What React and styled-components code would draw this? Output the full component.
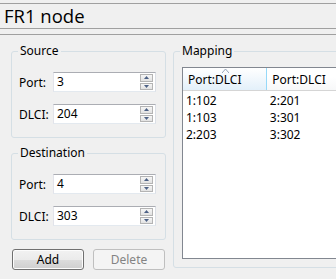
import * as React from "react"
import styled, { createGlobalStyle } from "styled-components"

const Global = createGlobalStyle`
  html, body {
    margin: 0;
    padding: 0;
    background: #f0f0f0;
  }
  body {
    font-family: "Noto Sans", "Open Sans", sans-serif;
    font-size: 12px;
    color: #000;
  }
`

const Page = styled.div`
  width: 336px;
  height: 279px;
  overflow: hidden;
  background: #f0f0f0;
  padding-top: 3px;
  box-sizing: border-box;
`

const TitleBar = styled.div`
  height: 24px;
  border-top: 1px solid #a0a0a0;
  border-bottom: 1px solid #a0a0a0;
  display: flex;
  align-items: center;
  padding-left: 4px;
  font-family: "Open Sans", "Noto Sans", sans-serif;
  font-size: 18.5px;
  line-height: 24px;
  color: #000;
`

const Separator = styled.div`
  margin-top: 5px;
  height: 1px;
  background: #a0a0a0;
`

const Body = styled.div`
  display: flex;
  gap: 7px;
  padding-left: 11px;
`

const LeftColumn = styled.div`
  width: 155px;
  flex: none;
  display: flex;
  flex-direction: column;
`

const Group = styled.div`
  position: relative;
  margin-top: ${p => p.$top}px;
  border: 1px solid #d5dfe5;
  border-radius: 3px;
  box-sizing: border-box;
  padding: 20px 9px 13px 7px;
  display: flex;
  flex-direction: column;
  gap: 12px;
`

const Legend = styled.span`
  position: absolute;
  top: -9px;
  left: 6px;
  padding: 0 2px;
  background: #f0f0f0;
  line-height: 16px;
`

const Row = styled.div`
  display: flex;
  align-items: center;
`

const Label = styled.span`
  width: 34px;
  flex: none;
`

const Spin = styled.div`
  flex: 1;
  height: 20px;
  box-sizing: border-box;
  border: 1px solid #abadb3;
  border-color: #abadb3 #dbdfe6 #e3e9ef #e2e3ea;
  background: #fff;
  display: flex;
  align-items: center;
  padding: 0 2px 0 3px;
`

const SpinValue = styled.span`
  flex: 1;
  line-height: 16px;
`

const SpinButtons = styled.div`
  width: 13px;
  height: 16px;
  display: flex;
  flex-direction: column;
  gap: 1px;
`

const SpinButton = styled.div`
  flex: 1;
  border: 1px solid #b4b4b4;
  background: linear-gradient(#f6f6f6, #e2e2e2);
  display: flex;
  align-items: center;
  justify-content: center;
`

const Arrow = ({ down }) => (
  <svg width="5" height="3" viewBox="0 0 5 3">
    <path d={down ? "M0 0H5L2.5 3Z" : "M0 3H5L2.5 0Z"} fill="#4d6185" />
  </svg>
)

const Field = ({ label, value }) => (
  <Row>
    <Label>{label}</Label>
    <Spin>
      <SpinValue>{value}</SpinValue>
      <SpinButtons>
        <SpinButton><Arrow /></SpinButton>
        <SpinButton><Arrow down /></SpinButton>
      </SpinButtons>
    </Spin>
  </Row>
)

const Buttons = styled.div`
  margin-top: 9px;
  display: flex;
  gap: 9px;
  padding-left: 1px;
`

const Button = styled.div`
  width: 72px;
  height: 21px;
  box-sizing: border-box;
  border-radius: 3px;
  display: flex;
  align-items: center;
  justify-content: center;
  border: 1px solid ${p => (p.$disabled ? "#bfbfbf" : "#707070")};
  background: ${p =>
    p.$disabled
      ? "#f4f4f4"
      : "linear-gradient(#f2f2f2 0%, #ebebeb 50%, #dddddd 51%, #cfcfcf 100%)"};
  color: ${p => (p.$disabled ? "#838383" : "#000")};
  box-shadow: ${p => (p.$disabled ? "none" : "inset 0 0 0 1px #fcfcfc")};
`

const MappingGroup = styled(Group)`
  width: 190px;
  flex: none;
  height: 217px;
  padding: 15px 0 8px 8px;
`

const List = styled.div`
  flex: 1;
  border: 1px solid #828790;
  border-right: none;
  background: #fff;
  display: flex;
  flex-direction: column;
`

const Header = styled.div`
  display: flex;
  height: 22px;
  border-bottom: 1px solid #d5d5d5;
`

const HeaderCell = styled.div`
  position: relative;
  width: ${p => p.$w}px;
  box-sizing: border-box;
  padding-left: 5px;
  display: flex;
  align-items: center;
  border-right: 1px solid ${p => (p.$sorted ? "#96d9f9" : "#e3e5e7")};
  background: ${p =>
    p.$sorted
      ? "linear-gradient(#ffffff, #f4f9fd 40%, #e3f0fa)"
      : "linear-gradient(#ffffff, #ffffff 40%, #f7f8f9)"};
`

const SortMark = styled.svg`
  position: absolute;
  top: 1px;
  left: 39px;
`

const DataRow = styled.div`
  display: flex;
  height: 17px;
  align-items: center;
  &:first-of-type { margin-top: 1px; }
`

const Cell = styled.div`
  width: ${p => p.$w}px;
  padding-left: 3px;
  box-sizing: border-box;
`

const rows = [
  ["1:102", "2:201"],
  ["1:103", "3:301"],
  ["2:203", "3:302"],
]

export default function App() {
  return (
    <Page>
      <Global />
      <TitleBar>FR1 node</TitleBar>
      <Separator />
      <Body>
        <LeftColumn>
          <Group $top={16}>
            <Legend>Source</Legend>
            <Field label="Port:" value="3" />
            <Field label="DLCI:" value="204" />
          </Group>
          <Group $top={15}>
            <Legend>Destination</Legend>
            <Field label="Port:" value="4" />
            <Field label="DLCI:" value="303" />
          </Group>
          <Buttons>
            <Button>Add</Button>
            <Button $disabled>Delete</Button>
          </Buttons>
        </LeftColumn>
        <MappingGroup $top={16}>
          <Legend>Mapping</Legend>
          <List>
            <Header>
              <HeaderCell $w={89} $sorted>
                Port:DLCI
                <SortMark width="7" height="4" viewBox="0 0 7 4">
                  <path d="M0 4L3.5 0L7 4" fill="none" stroke="#97a5b8" />
                </SortMark>
              </HeaderCell>
              <HeaderCell $w={100}>Port:DLCI</HeaderCell>
            </Header>
            <div>
              {rows.map(r => (
                <DataRow key={r[0]}>
                  <Cell $w={88}>{r[0]}</Cell>
                  <Cell $w={100}>{r[1]}</Cell>
                </DataRow>
              ))}
            </div>
          </List>
        </MappingGroup>
      </Body>
    </Page>
  )
}
